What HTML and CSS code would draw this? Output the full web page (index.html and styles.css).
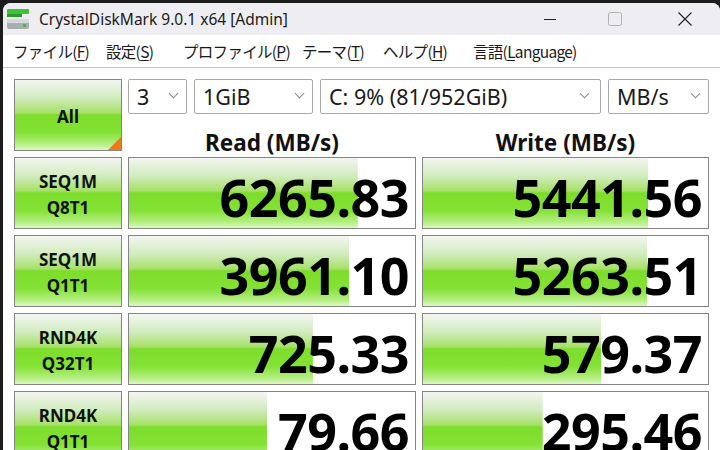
FILE: index.html
```html
<!DOCTYPE html>
<html lang="ja">

<head>
    <meta charset="UTF-8" />
    <title>CrystalDiskMark 9.0.1 x64 [Admin]</title>
    <link rel="stylesheet" href="styles.css">
</head>

<body>
    <div class="window">
        <div class="titlebar">
            <svg class="app-icon" width="24" height="22" viewBox="0 0 24 22">
                <rect x="1" y="1" width="22" height="5" rx="1" fill="#3cc23c" />
                <rect x="1" y="6" width="15" height="3" fill="#2a9a2a" />
                <rect x="1" y="11" width="22" height="10" rx="2" fill="#a9aeb2" />
                <rect x="1" y="11" width="22" height="4" rx="1" fill="#d4d8da" />
                <rect x="17" y="16" width="3" height="3" fill="#3cc23c" />
            </svg>
            <span class="title">CrystalDiskMark 9.0.1 x64 [Admin]</span>
            <div class="win-controls">
                <span class="ctl">
                    <svg width="16" height="16" viewBox="0 0 16 16"><path d="M2 8.5h12" stroke="#222" stroke-width="1" /></svg>
                </span>
                <span class="ctl">
                    <svg width="16" height="16" viewBox="0 0 16 16"><rect x="1.5" y="1.5" width="13" height="13" rx="2" fill="none" stroke="#b0b0b0" /></svg>
                </span>
                <span class="ctl">
                    <svg width="16" height="16" viewBox="0 0 16 16"><path d="M1.5 1.5l13 13M14.5 1.5l-13 13" stroke="#222" stroke-width="1.1" /></svg>
                </span>
            </div>
        </div>

        <div class="menubar">
            <span class="menu m-file">ファイル(<u>F</u>)</span>
            <span class="menu m-set">設定(<u>S</u>)</span>
            <span class="menu m-prof">プロファイル(<u>P</u>)</span>
            <span class="menu m-theme">テーマ(<u>T</u>)</span>
            <span class="menu m-help">ヘルプ(<u>H</u>)</span>
            <span class="menu">言語(<u>L</u>anguage)</span>
        </div>

        <div class="main">
            <div class="all-btn">All</div>
            <div class="top-right">
                <div class="combos">
                    <div class="combo c-count">3<i class="chev"></i></div>
                    <div class="combo c-size">1GiB<i class="chev"></i></div>
                    <div class="combo c-drive">C: 9% (81/952GiB)<i class="chev"></i></div>
                    <div class="combo c-unit">MB/s<i class="chev"></i></div>
                </div>
                <div class="heads">
                    <div class="head">Read (MB/s)</div>
                    <div class="head">Write (MB/s)</div>
                </div>
            </div>

            <div class="label">SEQ1M<br>Q8T1</div>
            <div class="bar" style="--w: 80%">6265.83</div>
            <div class="bar" style="--w: 79%">5441.56</div>

            <div class="label">SEQ1M<br>Q1T1</div>
            <div class="bar" style="--w: 77%">3961.10</div>
            <div class="bar" style="--w: 78.7%">5263.51</div>

            <div class="label">RND4K<br>Q32T1</div>
            <div class="bar" style="--w: 64.3%">725.33</div>
            <div class="bar" style="--w: 62.6%">579.37</div>

            <div class="label">RND4K<br>Q1T1</div>
            <div class="bar" style="--w: 48.3%">79.66</div>
            <div class="bar" style="--w: 42%">295.46</div>
        </div>
    </div>
</body>

</html>
```

FILE: styles.css
```css
:root {
    --frame: #1c1c1c;
    --title-bg: #eeedf2;
    --box-border: #858585;
    --combo-border: #a9a9a9;
    --text: #111;
    --green: linear-gradient(to bottom,
            #f3f6f1 0%,
            #d2ecbf 25%,
            #a6e168 47%,
            #7ddd2a 50%,
            #84e236 75%,
            #b6ef84 92%,
            #dcf8c6 100%);
}

* {
    margin: 0;
    padding: 0;
    box-sizing: border-box;
}

body {
    width: 720px;
    height: 450px;
    overflow: hidden;
    background: var(--frame);
    font-family: "Noto Sans", "Noto Sans CJK JP", sans-serif;
    color: var(--text);
}

.window {
    margin: 3px 0 0 3px;
    height: 447px;
    background: #fff;
    border-top-left-radius: 8px;
    border-top-right-radius: 8px;
    overflow: hidden;
}

/* title bar */
.titlebar {
    height: 32px;
    background: var(--title-bg);
    display: flex;
    align-items: center;
    padding-left: 3px;
}

.app-icon {
    margin-right: 9px;
}

.title {
    font-size: 15.5px;
    color: #1a1a1a;
}

.win-controls {
    margin-left: auto;
    display: flex;
}

.ctl {
    width: 70px;
    height: 32px;
    display: flex;
    align-items: center;
    justify-content: center;
}

.ctl:first-child {
    width: 60px;
}

/* menu */
.menubar {
    height: 33px;
    display: flex;
    align-items: center;
    padding-left: 10px;
    border-bottom: 1px solid #c8c8c8;
    font-family: "Noto Sans CJK JP", sans-serif;
    font-size: 15.5px;
    color: #1a1a1a;
}

.menu {
    letter-spacing: -0.7px;
}

.m-file { width: 93px; }
.m-set { width: 77px; }
.m-prof { width: 119px; }
.m-theme { width: 81px; }
.m-help { width: 90px; }

.menu u {
    text-underline-offset: 2px;
}

/* benchmark grid */
.main {
    padding: 11px 0 0 11px;
    display: grid;
    grid-template-columns: 108px 288px 287px;
    grid-template-rows: 72px repeat(4, 72px);
    column-gap: 6px;
    row-gap: 6px;
}

.all-btn,
.label {
    background: var(--green);
    border: 1px solid var(--box-border);
    display: flex;
    align-items: center;
    justify-content: center;
    font-weight: 700;
    text-align: center;
}

.all-btn {
    position: relative;
    font-size: 17px;
    padding-top: 2px;
}

/* orange corner flag */
.all-btn::after {
    content: "";
    position: absolute;
    right: 0;
    bottom: 0;
    border-style: solid;
    border-width: 0 0 13px 13px;
    border-color: transparent transparent #f07818 transparent;
}

.label {
    font-size: 17px;
    line-height: 26px;
    padding-top: 3px;
}

.top-right {
    grid-column: 2 / 4;
    display: flex;
    flex-direction: column;
}

.combos {
    height: 35px;
    display: flex;
    gap: 7px;
}

.combo {
    height: 35px;
    border: 1px solid var(--combo-border);
    background: #fff;
    border-radius: 2px;
    display: flex;
    align-items: center;
    padding: 0 0 1px 8px;
    font-size: 21.5px;
    color: #1a1a1a;
}

.c-count { width: 59px; }
.c-size { width: 119px; }
.c-drive { width: 281px; }
.c-unit { width: 101px; }

.chev {
    margin-left: auto;
    margin-right: 9px;
    width: 7px;
    height: 7px;
    border-right: 1.2px solid #8a8a8a;
    border-bottom: 1.2px solid #8a8a8a;
    transform: rotate(45deg);
    margin-bottom: 5px;
}

.c-drive .chev {
    margin-right: 12px;
}

.heads {
    flex: 1;
    display: grid;
    grid-template-columns: 288px 287px;
    column-gap: 6px;
}

.head {
    display: flex;
    align-items: center;
    justify-content: center;
    padding-top: 13px;
    font-size: 22.5px;
    font-weight: 700;
}

.bar {
    border: 1px solid var(--box-border);
    background-color: #fff;
    background-image: var(--green);
    background-repeat: no-repeat;
    background-size: var(--w) 100%;
    display: flex;
    align-items: center;
    justify-content: flex-end;
    padding: 6px 6px 0 0;
    font-size: 52px;
    font-weight: 700;
    color: #000;
    letter-spacing: -0.5px;
}
```
